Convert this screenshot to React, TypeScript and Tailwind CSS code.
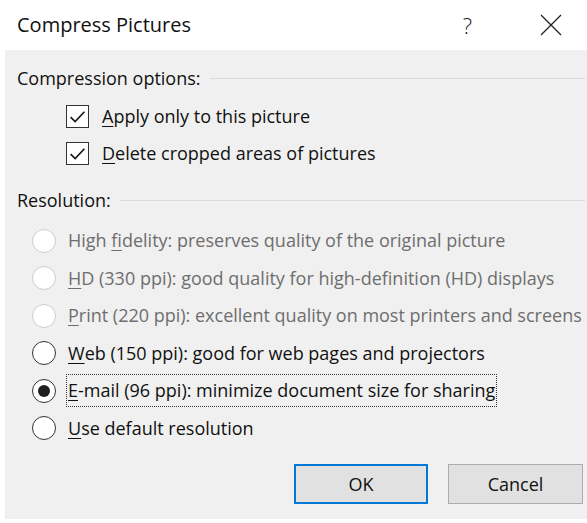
import { useState } from "react";

const font = { fontFamily: '"Open Sans", "Noto Sans", sans-serif' };

function SectionHeader({ label }: { label: string }) {
  return (
    <div className="flex items-center h-[24px] pr-[2px]">
      <span className="text-[18px] text-[#111] whitespace-nowrap">{label}</span>
      <div className="flex-1 h-px bg-[#dadada] ml-[9px]" />
    </div>
  );
}

function CheckBox({ label, hotkey }: { label: string; hotkey: number }) {
  return (
    <div className="flex items-center h-[37px] pl-[49px]">
      <div className="w-[23px] h-[23px] border border-[#333] bg-white flex items-center justify-center">
        <svg width="17" height="17" viewBox="0 0 16 16">
          <path d="M1.5 8.5 L5.8 12.8 L14.5 3.5" fill="none" stroke="#1a1a1a" strokeWidth="1.6" />
        </svg>
      </div>
      <span className="ml-[13px] text-[18px] text-[#111] whitespace-nowrap">
        {label.slice(0, hotkey)}
        <span className="underline underline-offset-[3px]">{label[hotkey]}</span>
        {label.slice(hotkey + 1)}
      </span>
    </div>
  );
}

interface RadioProps {
  label: string;
  hotkey: number;
  disabled?: boolean;
  checked?: boolean;
  focused?: boolean;
}

function Radio({ label, hotkey, disabled, checked, focused }: RadioProps) {
  return (
    <div className="flex items-center h-[37.5px] pl-[15px]">
      <div
        className={`w-[24px] h-[24px] rounded-full border bg-white flex items-center justify-center ${
          disabled ? "border-[#cccccc]" : "border-[#333333]"
        }`}
      >
        {checked && <div className="w-[12px] h-[12px] rounded-full bg-[#1f1f1f]" />}
      </div>
      <span
        className={`ml-[11px] text-[18px] whitespace-nowrap px-[1px] py-[2px] ${
          disabled ? "text-[#6e6e6e]" : "text-[#111]"
        } ${focused ? "outline outline-1 outline-dotted outline-[#333]" : ""}`}
      >
        {label.slice(0, hotkey)}
        <span className="underline underline-offset-[3px]">{label[hotkey]}</span>
        {label.slice(hotkey + 1)}
      </span>
    </div>
  );
}

export default function App() {
  const [res] = useState("email");

  return (
    <div className="w-[587px] h-[523px] bg-white flex flex-col overflow-hidden" style={font}>
      {/* Title bar */}
      <div className="h-[50px] flex items-center pl-[17px]">
        <span className="text-[20px] text-[#111]">Compress Pictures</span>
        <span className="ml-auto text-[22px] font-light text-[#222] mr-[68px]">?</span>
        <svg width="22" height="22" viewBox="0 0 22 22" className="mr-[25px]">
          <path d="M1 1 L21 21 M21 1 L1 21" stroke="#222" strokeWidth="1.3" />
        </svg>
      </div>

      {/* Body */}
      <div className="ml-[5px] h-[469px] bg-[#f0f0f0] pl-[12px] pt-[16px]">
        <SectionHeader label="Compression options:" />
        <div className="mt-[8px]">
          <CheckBox label="Apply only to this picture" hotkey={0} />
          <CheckBox label="Delete cropped areas of pictures" hotkey={0} />
        </div>

        <div className="mt-[16px]">
          <SectionHeader label="Resolution:" />
        </div>
        <div className="mt-[10px]">
          <Radio label="High fidelity: preserves quality of the original picture" hotkey={5} disabled />
          <Radio label="HD (330 ppi): good quality for high-definition (HD) displays" hotkey={0} disabled />
          <Radio label="Print (220 ppi): excellent quality on most printers and screens" hotkey={0} disabled />
          <Radio label="Web (150 ppi): good for web pages and projectors" hotkey={0} checked={res === "web"} />
          <Radio
            label="E-mail (96 ppi): minimize document size for sharing"
            hotkey={0}
            checked={res === "email"}
            focused
          />
          <Radio label="Use default resolution" hotkey={0} checked={res === "default"} />
        </div>

        <div className="flex mt-[17px] pl-[277px] gap-[20px]">
          <button className="w-[134px] h-[40px] bg-[#e1e1e1] border-2 border-[#0078d7] text-[18px] text-[#111]">
            OK
          </button>
          <button className="w-[135px] h-[40px] bg-[#e1e1e1] border border-[#adadad] text-[18px] text-[#111]">
            Cancel
          </button>
        </div>
      </div>
    </div>
  );
}
